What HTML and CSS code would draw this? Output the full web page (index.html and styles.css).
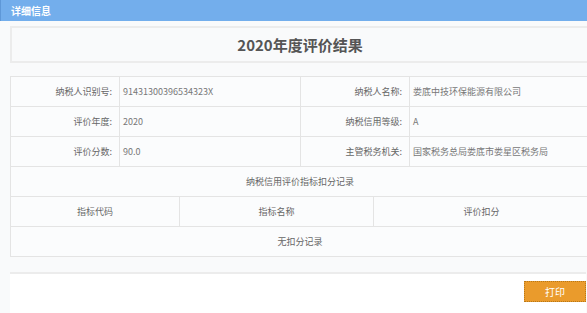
FILE: index.html
```html
<!DOCTYPE html>
<html lang="zh-CN">
<head>
    <meta charset="UTF-8">
    <title>详细信息</title>
    <link rel="stylesheet" href="styles.css">
</head>
<body>
    <div class="dialog">
        <div class="dialog-title">详细信息</div>
        <div class="dialog-body">
            <div class="result-title">2020年度评价结果</div>
            <table class="info-table">
                <colgroup>
                    <col style="width:109px">
                    <col style="width:181px">
                    <col style="width:109px">
                    <col>
                </colgroup>
                <tr>
                    <td class="label">纳税人识别号:</td>
                    <td class="value">91431300396534323X</td>
                    <td class="label">纳税人名称:</td>
                    <td class="value">娄底中技环保能源有限公司</td>
                </tr>
                <tr>
                    <td class="label">评价年度:</td>
                    <td class="value">2020</td>
                    <td class="label">纳税信用等级:</td>
                    <td class="value">A</td>
                </tr>
                <tr>
                    <td class="label">评价分数:</td>
                    <td class="value">90.0</td>
                    <td class="label">主管税务机关:</td>
                    <td class="value">国家税务总局娄底市娄星区税务局</td>
                </tr>
            </table>
            <table class="info-table record-table">
                <colgroup>
                    <col style="width:169px">
                    <col style="width:194px">
                    <col>
                </colgroup>
                <tr><td colspan="3">纳税信用评价指标扣分记录</td></tr>
                <tr>
                    <td>指标代码</td>
                    <td>指标名称</td>
                    <td>评价扣分</td>
                </tr>
                <tr><td colspan="3">无扣分记录</td></tr>
            </table>
        </div>
        <div class="dialog-footer">
            <button class="btn-print">打印</button>
        </div>
    </div>
</body>
</html>
```

FILE: styles.css
```css
body {
    margin: 0;
    background-color: #f9fafb;
    font-family: "Noto Sans CJK SC", "Noto Sans", sans-serif;
    overflow: hidden;
}
.dialog {
    width: 600px;
}
.dialog-title {
    height: 21px;
    line-height: 21px;
    padding-left: 10px;
    background-color: #73aeec;
    border-left: 1px solid #5e98d8;
    color: #fff;
    font-size: 10px;
    font-weight: bold;
}
.dialog-body {
    padding: 5px 0 0 10px;
    width: 580px;
}
.result-title {
    height: 33px;
    line-height: 33px;
    border: 2px solid #ececec;
    text-align: center;
    font-size: 15px;
    font-weight: bold;
    color: #555;
    margin-bottom: 13px;
}
.info-table {
    width: 580px;
    border-collapse: collapse;
    table-layout: fixed;
    font-size: 9px;
    color: #666;
    background-color: #fbfcfd;
}
.info-table td {
    height: 29px;
    padding: 0;
    border: 1px solid #e4e4e4;
}
.info-table .label {
    text-align: right;
    padding-right: 7px;
}
.info-table .value {
    padding-left: 3px;
    color: #777;
}
.record-table tr:first-child td {
    border-top: none;
}
.record-table td {
    text-align: center;
}
.dialog-footer {
    display: flex;
    justify-content: flex-end;
    align-items: flex-start;
    margin-top: 15px;
    margin-left: 10px;
    border-top: 2px solid #ececec;
    background-color: #fff;
    height: 45px;
    padding-top: 7px;
    width: 576px;
    box-sizing: border-box;
}
.btn-print {
    width: 62px;
    height: 21px;
    padding: 0;
    background-color: #ea9b2c;
    border: 1px dotted #b87818;
    color: #fff;
    font-family: "Noto Sans CJK SC", sans-serif;
    font-size: 10px;
    cursor: pointer;
}
```
